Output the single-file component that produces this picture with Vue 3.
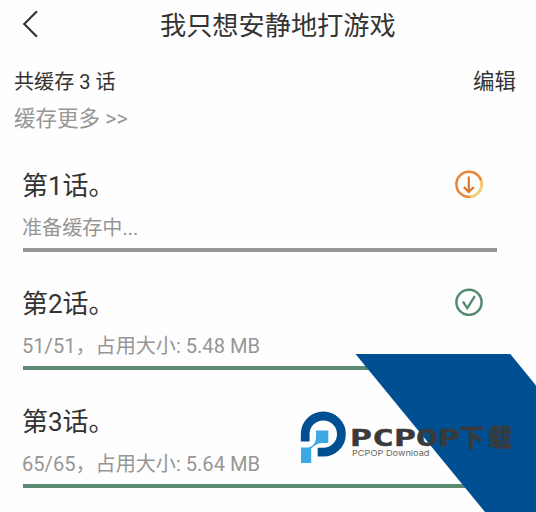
<script setup>
const episodes = [
  { id: 1, title: '第1话。', status: '准备缓存中...', done: false },
  { id: 2, title: '第2话。', status: '51/51，占用大小: 5.48 MB', done: true },
  { id: 3, title: '第3话。', status: '65/65，占用大小: 5.64 MB', done: true },
]
</script>

<template>
  <main class="screen">
    <header class="bar">
      <svg class="back" width="16" height="28" viewBox="0 0 16 28">
        <path d="M15 1.2 2.2 14 15 26.8" fill="none" stroke="#333" stroke-width="2.1" />
      </svg>
      <h1 class="heading">我只想安静地打游戏</h1>
    </header>

    <section class="summary">
      <span class="count">共缓存 3 话</span>
      <span class="edit">编辑</span>
    </section>
    <div class="more">缓存更多 &gt;&gt;</div>

    <ul class="list">
      <li v-for="ep in episodes" :key="ep.id" class="episode">
        <div class="top">
          <span class="name">{{ ep.title }}</span>
          <svg v-if="!ep.done" class="icon" width="28" height="28" viewBox="0 0 28 28" fill="none">
            <circle cx="14" cy="14.3" r="12.6" stroke="#e88535" stroke-width="2.5" />
            <path d="M26 10.5A12.6 12.6 0 0 1 15.1 26.85" stroke="#f4d07a" stroke-width="2.5" />
            <path d="M13.8 6.5V21.3M8.8 17.1l5 4.8 5-4.8" stroke="#de7c2e" stroke-width="2.2" />
          </svg>
          <svg v-else-if="ep.id === 2" class="icon" width="28" height="28" viewBox="0 0 28 28" fill="none">
            <circle cx="14" cy="14.3" r="12.6" stroke="#568b70" stroke-width="2.5" />
            <path d="M7.9 13.5l4.4 6.6 7.5-11.9" stroke="#568b70" stroke-width="2.3" />
          </svg>
        </div>
        <div class="status">{{ ep.status }}</div>
        <div class="progress" :class="{ done: ep.done }"></div>
      </li>
    </ul>

    <svg class="brand" width="240" height="158" viewBox="296 354 240 158">
      <path d="M355.5 354H510.3L536 385.5V512H485Z" fill="#004f92" />
      <path d="M305.2 441.4V434A18.1 18.1 0 1 1 323.3 452.2H317.7" fill="none" stroke="#004f92" stroke-width="8.8" />
      <path d="M316 430.4H328.3V443H321.5Q316 443.5 311.2 448.5V463H301V447.4H309Q315.5 445.5 316 438Z" fill="#3ca9e5" />
      <text class="wordmark" x="350" y="445.8" textLength="110" lengthAdjust="spacingAndGlyphs">PCPOP</text>
      <text class="wordmark cn" x="459 487.5" y="446.5">下载</text>
      <text class="sub" x="352" y="456" textLength="77.5" lengthAdjust="spacingAndGlyphs">PCPOP Download</text>
    </svg>
  </main>
</template>

<style>
body {
  margin: 0;
  background: #fefefe;
}
</style>

<style scoped>
.screen {
  position: relative;
  box-sizing: border-box;
  width: 536px;
  height: 512px;
  overflow: hidden;
  background: #fefefe;
  color: #333;
  font-family: Roboto, "Noto Sans CJK SC", sans-serif;
}
.bar {
  display: flex;
  align-items: center;
  height: 50px;
}
.back {
  margin: 0 0 2px 22px;
}
.heading {
  margin: 2px 0 0 122px;
  font-size: 26.2px;
  font-weight: 400;
  line-height: 50px;
}
.summary {
  display: flex;
  justify-content: space-between;
  height: 30px;
  padding: 17px 20px 0 14px;
  line-height: 30px;
}
.count {
  font-size: 20.1px;
}
.edit {
  font-size: 21.5px;
}
.more {
  height: 30px;
  padding: 7px 0 0 14px;
  color: #969696;
  font-size: 21.5px;
  line-height: 30px;
}
.list {
  margin: 0;
  padding: 32px 39px 0 23px;
  list-style: none;
}
.episode {
  height: 118px;
}
.top {
  display: flex;
  justify-content: space-between;
  height: 40px;
}
.name {
  margin-left: -1px;
  font-size: 26px;
  line-height: 40px;
}
.icon {
  margin: 4px 14px 0 0;
}
.status {
  height: 42px;
  margin-left: -1px;
  color: #969696;
  font-size: 20.1px;
  line-height: 44px;
}
.progress {
  height: 4.4px;
  background: #969696;
}
.progress.done {
  background: #5b8c73;
}
.brand {
  position: absolute;
  right: 0;
  bottom: 0;
}
.wordmark {
  fill: #383a3b;
  stroke: #383a3b;
  stroke-width: 0.5px;
  font: 700 23px "DejaVu Sans Mono", monospace;
}
.wordmark.cn {
  font: 700 25px "Noto Sans CJK SC", sans-serif;
}
.sub {
  fill: #666;
  font: 400 8px Inter, sans-serif;
}
</style>
